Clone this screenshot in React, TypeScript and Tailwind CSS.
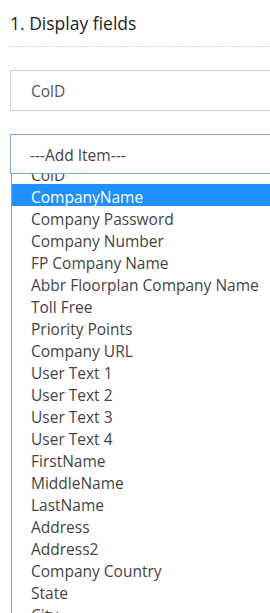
const OPTIONS = [
  "ColD",
  "CompanyName",
  "Company Password",
  "Company Number",
  "FP Company Name",
  "Abbr Floorplan Company Name",
  "Toll Free",
  "Priority Points",
  "Company URL",
  "User Text 1",
  "User Text 2",
  "User Text 3",
  "User Text 4",
  "FirstName",
  "MiddleName",
  "LastName",
  "Address",
  "Address2",
  "Company Country",
  "State",
  "City",
];

export default function App() {
  return (
    <div className="w-[270px] h-[613px] overflow-hidden bg-white font-['Open_Sans',sans-serif] text-[#333]">
      <div className="w-[320px] pl-[10px]">
        {/* HEADER */}
        <h2 className="pt-[11px] pb-[11px] text-[17.5px] leading-[24px] text-[#222]">1. Display fields</h2>
        <div className="border-t border-dashed border-[#d4d4d4]" />

        {/* SELECTED */}
        <div className="mt-[23px] h-[41px] border border-[#cfcfcf] pl-[20px] pt-[2px] flex items-center text-[15.5px] text-[#555]">
          ColD
        </div>

        {/* ADD ITEM SELECT */}
        <div className="mt-[23px] h-[40px] border border-[#7da6db] pl-[19px] pt-[3px] flex items-center text-[15.5px] text-[#444]">
          ---Add Item---
        </div>

        {/* OPEN LIST */}
        <div className="ml-[1px] h-[440px] overflow-hidden border-l border-[#8a9bb0]">
          <div className="-mt-[12px]">
            {OPTIONS.map((opt) => (
              <div
                key={opt}
                className={
                  opt === "CompanyName"
                    ? "h-[22px] pl-[19px] pt-[2px] leading-[22px] whitespace-nowrap text-[15.5px] bg-[#1e90ff] text-white"
                    : "h-[22px] pl-[19px] pt-[2px] leading-[22px] whitespace-nowrap text-[15.5px] text-[#444]"
                }
              >
                {opt}
              </div>
            ))}
          </div>
        </div>
      </div>
    </div>
  );
}
